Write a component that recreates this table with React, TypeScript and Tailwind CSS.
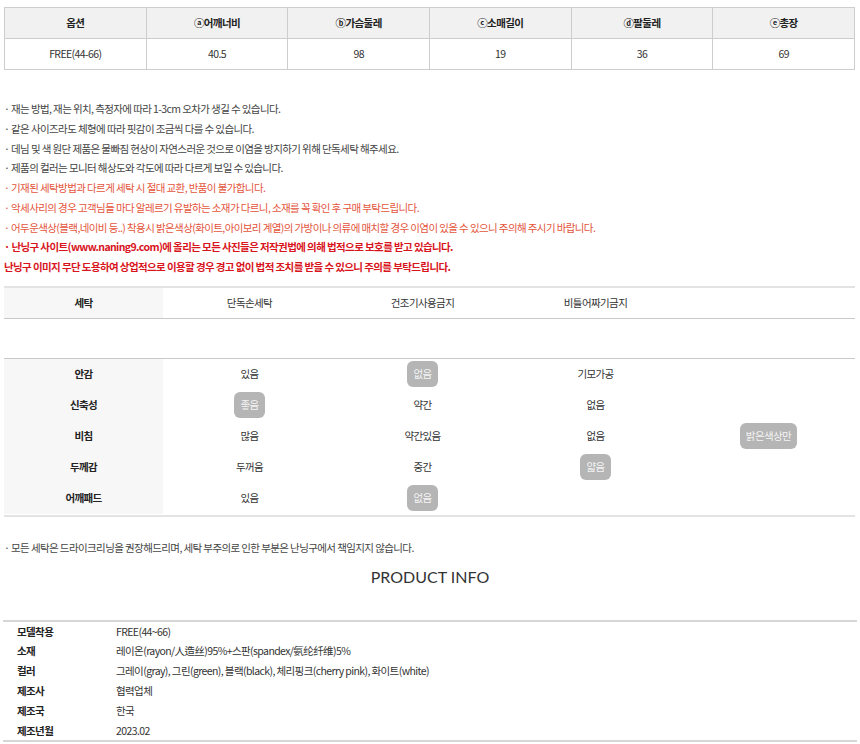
import React from 'react';

const sizeHeads = ['옵션', 'ⓐ어깨너비', 'ⓑ가슴둘레', 'ⓒ소매길이', 'ⓓ팔둘레', 'ⓔ총장'];
const sizeRow = ['FREE(44-66)', '40.5', '98', '19', '36', '69'];

const notes: { text: string; tone: 'gray' | 'red' | 'bold' }[] = [
  { text: '· 재는 방법, 재는 위치, 측정자에 따라 1-3cm 오차가 생길 수 있습니다.', tone: 'gray' },
  { text: '· 같은 사이즈라도 체형에 따라 핏감이 조금씩 다를 수 있습니다.', tone: 'gray' },
  { text: '· 데님 및 색 원단 제품은 물빠짐 현상이 자연스러운 것으로 이염을 방지하기 위해 단독세탁 해주세요.', tone: 'gray' },
  { text: '· 제품의 컬러는 모니터 해상도와 각도에 따라 다르게 보일 수 있습니다.', tone: 'gray' },
  { text: '· 기재된 세탁방법과 다르게 세탁 시 절대 교환, 반품이 불가합니다.', tone: 'red' },
  { text: '· 악세사리의 경우 고객님들 마다 알레르기 유발하는 소재가 다르니, 소재를 꼭 확인 후 구매 부탁드립니다.', tone: 'red' },
  { text: '· 어두운색상(블랙,네이비 등..) 착용시 밝은색상(화이트,아이보리 계열)의 가방이나 의류에 매치할 경우 이염이 있을 수 있으니 주의해 주시기 바랍니다.', tone: 'red' },
  { text: '· 난닝구 사이트(www.naning9.com)에 올리는 모든 사진들은 저작권법에 의해 법적으로 보호를 받고 있습니다.', tone: 'bold' },
  { text: '난닝구 이미지 무단 도용하여 상업적으로 이용할 경우 경고 없이 법적 조치를 받을 수 있으니 주의를 부탁드립니다.', tone: 'bold' },
];

type Cell = { v: string; on?: boolean } | null;

const fabric: { label: string; cells: Cell[] }[] = [
  { label: '안감', cells: [{ v: '있음' }, { v: '없음', on: true }, { v: '기모가공' }, null] },
  { label: '신축성', cells: [{ v: '좋음', on: true }, { v: '약간' }, { v: '없음' }, null] },
  { label: '비침', cells: [{ v: '많음' }, { v: '약간있음' }, { v: '없음' }, { v: '밝은색상만', on: true }] },
  { label: '두께감', cells: [{ v: '두꺼움' }, { v: '중간' }, { v: '얇음', on: true }, null] },
  { label: '어깨패드', cells: [{ v: '있음' }, { v: '없음', on: true }, null, null] },
];

const info = [
  ['모델착용', 'FREE(44~66)'],
  ['소재', '레이온(rayon/人造丝)95%+스판(spandex/氨纶纤维)5%'],
  ['컬러', '그레이(gray), 그린(green), 블랙(black), 체리핑크(cherry pink), 화이트(white)'],
  ['제조사', '협력업체'],
  ['제조국', '한국'],
  ['제조년월', '2023.02'],
];

export default function App() {
  return (
    <div className="w-[860px] min-h-[744px] bg-white pt-[7px] font-['Noto_Sans_CJK_KR',sans-serif] text-[10.5px] tracking-[-0.6px] text-[#333]">
      {/* size table */}
      <table className="ml-[4px] w-[851px] table-fixed border-collapse text-center">
        <thead>
          <tr className="h-[31px] bg-[#f1f1f1]">
            {sizeHeads.map((h) => (
              <th key={h} className="border border-[#cdcdcd] font-bold text-[#222]">
                {h}
              </th>
            ))}
          </tr>
        </thead>
        <tbody>
          <tr className="h-[31px]">
            {sizeRow.map((c, i) => (
              <td key={i} className="border border-[#cdcdcd]">
                {c}
              </td>
            ))}
          </tr>
        </tbody>
      </table>

      {/* notes */}
      <ul className="mt-[29px] ml-[4px] leading-[19.75px]">
        {notes.map((n) => (
          <li
            key={n.text}
            className={
              n.tone === 'gray'
                ? 'text-[#444]'
                : n.tone === 'red'
                ? 'text-[#e4533b]'
                : 'font-bold text-[#d8141c]'
            }
          >
            {n.text}
          </li>
        ))}
      </ul>

      {/* washing */}
      <div className="mt-[9px] ml-[4px] grid h-[33px] w-[851px] grid-cols-[159px_repeat(4,1fr)] items-stretch border-t-2 border-b border-t-[#e3e3e3] border-b-[#c9c9c9] text-center">
        <div className="flex items-center justify-center bg-[#f7f7f7] font-bold text-[#222]">세탁</div>
        <div className="flex items-center justify-center">단독손세탁</div>
        <div className="flex items-center justify-center">건조기사용금지</div>
        <div className="flex items-center justify-center">비틀어짜기금지</div>
        <div />
      </div>

      {/* fabric */}
      <div className="mt-[39px] ml-[4px] w-[851px] border-t border-b-2 border-t-[#c9c9c9] border-b-[#e3e3e3] pb-[1px] text-center">
        {fabric.map((row) => (
          <div key={row.label} className="grid h-[31px] grid-cols-[159px_repeat(4,1fr)]">
            <div className="flex items-center justify-center bg-[#f7f7f7] font-bold text-[#222]">{row.label}</div>
            {row.cells.map((c, i) => (
              <div key={i} className="flex items-center justify-center">
                {c &&
                  (c.on ? (
                    <span className="flex h-[26px] items-center rounded-[6px] bg-[#b5b5b5] px-[6px] text-[#f4f4f4]">
                      {c.v}
                    </span>
                  ) : (
                    c.v
                  ))}
              </div>
            ))}
          </div>
        ))}
      </div>

      <p className="mt-[21px] ml-[4px] leading-[19.75px] text-[#444]">
        · 모든 세탁은 드라이크리닝을 권장해드리며, 세탁 부주의로 인한 부분은 난닝구에서 책임지지 않습니다.
      </p>

      <h2 className="mt-[7px] text-center font-['Lato',sans-serif] text-[16px] leading-[24px] tracking-normal text-[#333]">
        PRODUCT INFO
      </h2>

      {/* product info */}
      <div className="mt-[31px] ml-[3px] w-[854px] border-t-2 border-b-2 border-[#d6d6d6]">
        {info.map(([k, v]) => (
          <div key={k} className="flex h-[19.8px] items-center">
            <div className="w-[113px] shrink-0 pl-[14px] font-bold text-[#222]">{k}</div>
            <div className="text-[#333]">{v}</div>
          </div>
        ))}
      </div>
    </div>
  );
}
